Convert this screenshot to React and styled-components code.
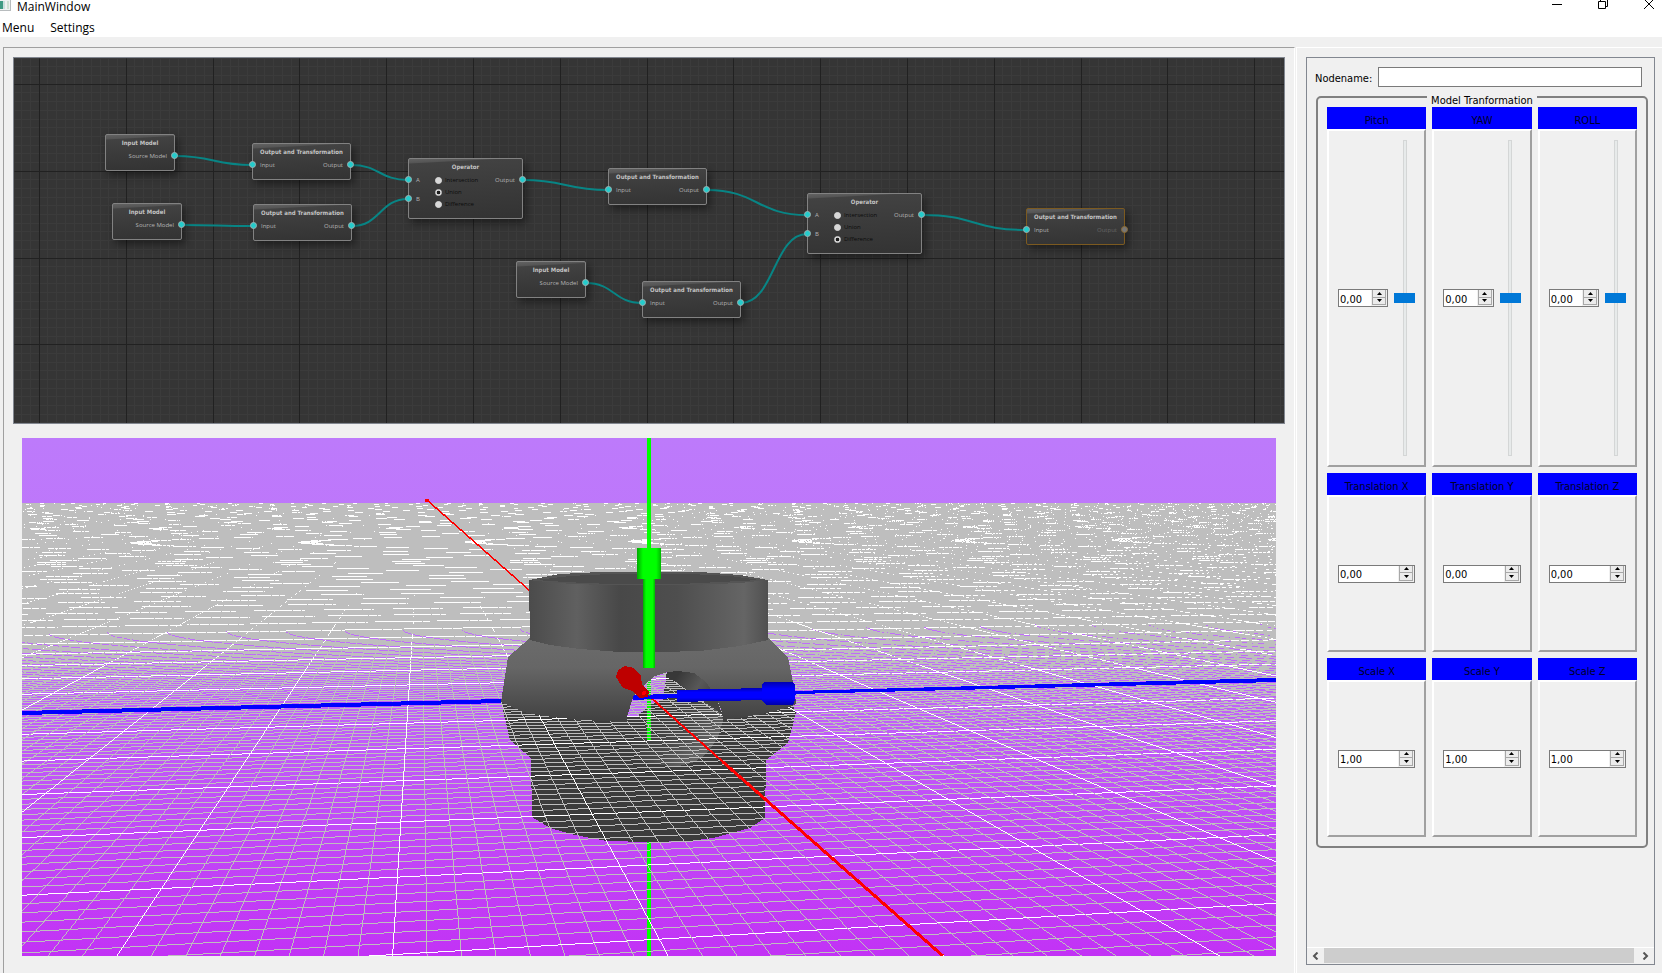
import React, { useMemo } from "react";
import styled, { createGlobalStyle } from "styled-components";

const GlobalStyle = createGlobalStyle`
  *, *::before, *::after { box-sizing: border-box; }
  body { margin: 0; background: #f0f0f0; color: #000; font: 11px/14px "DejaVu Sans Condensed", "DejaVu Sans", sans-serif; }
  button, input { font: inherit; color: inherit; margin: 0; }
`;

/* ---------- window chrome ---------- */

const Window = styled.div`
  display: flex;
  flex-direction: column;
  min-height: 100vh;
  overflow: hidden;
`;

const TitleBar = styled.header`
  display: flex;
  align-items: flex-start;
  height: 17px;
  background: #fff;
  font: 12px/14px "Open Sans", "Noto Sans", sans-serif;
`;

const AppTitle = styled.h1`
  flex: 1;
  margin: 0 0 0 5px;
  font: inherit;
`;

const WindowButtons = styled.div`
  display: flex;
  gap: 36px;
  padding-right: 8px;
`;

const WindowButton = styled.button`
  width: 10px;
  height: 11px;
  padding: 0;
  border: 0;
  background: none;
  svg { display: block; }
`;

const MenuBar = styled.nav`
  display: flex;
  gap: 16px;
  height: 20px;
  padding-left: 2px;
  background: #fff;
`;

const MenuButton = styled.button`
  padding: 0;
  border: 0;
  background: none;
  font: 12px/22px "Open Sans", "Noto Sans", sans-serif;
`;

const Main = styled.main`
  display: flex;
  flex: 1;
  gap: 1px;
  padding: 10px 0 0 3px;
`;

const WorkPane = styled.section`
  display: flex;
  flex: 1;
  flex-direction: column;
  gap: 14px;
  min-width: 0;
  padding: 9px 9px 17px;
  border: solid #a0a0a0;
  border-width: 1px 1px 0 1px;
  border-right-color: #fff;
`;

/* ---------- node graph ---------- */

const Graph = styled.div`
  position: relative;
  flex: 365 1 0;
  overflow: hidden;
  border: 1px solid #828790;
  background: #353535;
`;

const GraphLayer = styled.svg`
  position: absolute;
  inset: 0;
  width: 100%;
  height: 100%;
`;

const NodeBox = styled.article`
  position: absolute;
  left: ${(p) => p.$x}px;
  top: ${(p) => p.$y}px;
  width: ${(p) => p.$w}px;
  height: ${(p) => p.$h}px;
  padding-top: 3px;
  border: 1px solid ${(p) => (p.$selected ? "#7c5a20" : "#828282")};
  border-radius: 2px;
  background: linear-gradient(177deg, #626262 0, #555 4px, #424242 5px, #3b3b3b 50%, #333 100%);
  box-shadow: 3px 4px 8px rgba(0, 0, 0, 0.45);
  color: #b4b4b4;
  font: 6px/8px "Open Sans", "Noto Sans", sans-serif;
`;

const NodeTitle = styled.h2`
  margin: 0 0 4px;
  color: #c4c4c4;
  font: bold 6px/10px "DejaVu Sans Condensed", "DejaVu Sans", sans-serif;
  text-align: center;
  white-space: nowrap;
`;

const NodeBody = styled.div`
  display: flex;
  justify-content: space-between;
`;

const PortList = styled.div`
  display: flex;
  flex-direction: column;
  gap: 11px;
`;

const Port = styled.span`
  position: relative;
  padding: 0 7px;
  color: ${(p) => (p.$off ? "#666" : "inherit")};
  &::after {
    content: "";
    position: absolute;
    top: 0;
    ${(p) => (p.$out ? "right: -4px;" : "left: -4px;")}
    width: 7px;
    height: 7px;
    border: 1px solid ${(p) => (p.$off ? "#8a6a34" : "#9ab0b0")};
    border-radius: 50%;
    background: ${(p) => (p.$off ? "#777" : "#24cccc")};
  }
`;

const Choices = styled.div`
  display: flex;
  flex: 1;
  flex-direction: column;
  gap: 4px;
  padding-left: 8px;
`;

const Choice = styled.label`
  display: flex;
  align-items: center;
  gap: 3px;
  height: 8px;
  color: #0c0c0c;
`;

const Radio = styled.input`
  appearance: none;
  width: 7px;
  height: 7px;
  border: 1px solid #d8d8d8;
  border-radius: 50%;
  background: #d8d8d8;
  &:checked { background: radial-gradient(circle, #1c1c1c 40%, #d8d8d8 60%); }
`;

const NODES = [
  { id: "in1", kind: "input", x: 91, y: 76 },
  { id: "in2", kind: "input", x: 98, y: 145 },
  { id: "out1", kind: "output", x: 238, y: 85 },
  { id: "out2", kind: "output", x: 239, y: 146 },
  { id: "op1", kind: "operator", x: 394, y: 100, value: "Union" },
  { id: "out3", kind: "output", x: 594, y: 110 },
  { id: "in3", kind: "input", x: 502, y: 203 },
  { id: "out4", kind: "output", x: 628, y: 223 },
  { id: "op2", kind: "operator", x: 793, y: 135, value: "Difference" },
  { id: "out5", kind: "output", x: 1012, y: 150, selected: true },
];

const SIZES = { input: [70, 37], output: [99, 37], operator: [115, 61] };

const LINKS = [
  ["in1", "out1", 0],
  ["in2", "out2", 0],
  ["out1", "op1", 0],
  ["out2", "op1", 1],
  ["op1", "out3", 0],
  ["in3", "out4", 0],
  ["out3", "op2", 0],
  ["out4", "op2", 1],
  ["op2", "out5", 0],
];

function Node({ node }) {
  const [w, h] = SIZES[node.kind];
  const box = { $x: node.x, $y: node.y, $w: w, $h: h, $selected: node.selected };
  if (node.kind === "input") {
    return (
      <NodeBox {...box}>
        <NodeTitle>Input Model</NodeTitle>
        <NodeBody>
          <span />
          <Port $out>Source Model</Port>
        </NodeBody>
      </NodeBox>
    );
  }
  if (node.kind === "output") {
    return (
      <NodeBox {...box}>
        <NodeTitle>Output and Transformation</NodeTitle>
        <NodeBody>
          <Port>Input</Port>
          <Port $out $off={node.selected}>Output</Port>
        </NodeBody>
      </NodeBox>
    );
  }
  return (
    <NodeBox {...box}>
      <NodeTitle>Operator</NodeTitle>
      <NodeBody>
        <PortList>
          <Port>A</Port>
          <Port>B</Port>
        </PortList>
        <Choices>
          {["Intersection", "Union", "Difference"].map((name) => (
            <Choice key={name}>
              <Radio type="radio" name={node.id} defaultChecked={node.value === name} />
              {name}
            </Choice>
          ))}
        </Choices>
        <Port $out>Output</Port>
      </NodeBody>
    </NodeBox>
  );
}

function gridPath(first, step, skipMajor) {
  let d = "";
  for (let i = 0; i < 440; i++) {
    if (skipMajor && i % 10 === 0) continue;
    d += first(Math.round(i * step));
  }
  return d;
}

function GraphView() {
  const byId = Object.fromEntries(NODES.map((n) => [n.id, n]));
  const major = gridPath((v) => `M${v + 25} 0v2400`, 86.8) + gridPath((v) => `M0 ${v + 26}h4000`, 86.8);
  const minor =
    gridPath((v) => `M${v - 62} 0v2400`, 8.68, true) + gridPath((v) => `M0 ${v - 61}h4000`, 8.68, true);
  return (
    <Graph>
      <GraphLayer aria-hidden="true">
        <g transform="translate(0.5 0.5)" fill="none">
          <path d={minor} stroke="#3b3b3b" />
          <path d={major} stroke="#212121" />
        </g>
        <g fill="none" stroke="#088585" strokeWidth="2">
          {LINKS.map(([from, to, slot]) => {
            const a = byId[from];
            const b = byId[to];
            const x1 = a.x + SIZES[a.kind][0];
            const y1 = a.y + 22;
            const x2 = b.x;
            const y2 = b.y + 22 + slot * 19;
            const mid = (x1 + x2) / 2;
            return <path key={from + to} d={`M${x1} ${y1}C${mid} ${y1} ${mid} ${y2} ${x2} ${y2}`} />;
          })}
        </g>
      </GraphLayer>
      {NODES.map((n) => (
        <Node key={n.id} node={n} />
      ))}
    </Graph>
  );
}

/* ---------- 3D viewport ---------- */

const Viewport = styled.svg`
  display: block;
  flex: 518 1 0;
  min-height: 0;
  width: calc(100% - 18px);
  margin: 0 9px;
`;

// The ground plane in perspective: every line of one direction runs to a shared
// vanishing point on the horizon, and the nearest line wins a contested pixel.
const VIEW = { x: 22, y: 438, w: 1254, h: 518 };
const HORIZON = 495;
const ORIGIN = { x: 649, h: 201 };
const FAR_X = 8310;
const NEAR_X = 421;
const MINOR = 8;
const SPAN = (FAR_X - NEAR_X) / ORIGIN.h;
const STEP_ACROSS = (0.0887 * SPAN) / MINOR;
const ACROSS_0 = (FAR_X - ORIGIN.x) / ORIGIN.h;
const STEP_ALONG = 0.598 / MINOR;
const ALONG_0 = (ORIGIN.x - NEAR_X) / ORIGIN.h;

function groundPaths() {
  const grey = [];
  const white = [];
  const top = 503;
  const right = VIEW.x + VIEW.w;
  for (let y = top; y < VIEW.y + VIEW.h; y++) {
    const h0 = y - HORIZON;
    const h1 = h0 + 1;
    let run = 0;
    let start = VIEW.x;
    for (let x = VIEW.x; x <= right; x++) {
      let cell = 0;
      if (x < right) {
        const cx = x + 0.5;
        let best = -1;
        const far = (FAR_X - cx) / STEP_ACROSS;
        const i = Math.ceil(far / h1 - ACROSS_0 / STEP_ACROSS);
        const hi = far / (i + ACROSS_0 / STEP_ACROSS);
        if (hi >= h0) {
          best = hi;
          cell = i % MINOR === 0 ? 2 : 1;
        }
        const dx = cx - NEAR_X;
        const slope = dx / (h0 + 0.5);
        let j;
        let hj = -1;
        if (Math.abs(slope) > 1) {
          j = (dx / h1 - ALONG_0) / STEP_ALONG;
          j = dx > 0 ? Math.ceil(j) : Math.floor(j);
          hj = dx / (ALONG_0 + j * STEP_ALONG);
          if (hj < h0 || hj > h1) hj = -1;
        } else {
          const hm = h0 + 0.5;
          j = Math.ceil(((dx - 0.5) / hm - ALONG_0) / STEP_ALONG);
          if ((ALONG_0 + j * STEP_ALONG) * hm < dx + 0.5) hj = hm;
        }
        if (hj > best) cell = j % MINOR === 0 ? 2 : 1;
        else if (hj >= 0 && j % MINOR === 0 && h0 > 170) cell = 2;
      } else cell = -1;
      if (cell !== run) {
        if (run > 0) (run === 1 ? grey : white).push(`M${start} ${y}h${x - start}v1h${start - x}z`);
        run = cell;
        start = x;
      }
    }
  }
  return { grey: grey.join(""), white: white.join("") };
}

function SceneView() {
  const ground = useMemo(groundPaths, []);
  return (
    <Viewport viewBox="22 438 1254 518" preserveAspectRatio="xMidYMid slice" shapeRendering="crispEdges" role="img" aria-label="3D model view">
      <defs>
        <linearGradient id="sky" x1="0" y1="0" x2="0" y2="1">
          <stop offset="0" stopColor="#bd7afb" />
          <stop offset="0.35" stopColor="#bf72fa" />
          <stop offset="1" stopColor="#c232f5" />
        </linearGradient>
        <linearGradient id="neck" x1="0" y1="0" x2="1" y2="0">
          <stop offset="0" stopColor="#4b4b4b" />
          <stop offset="0.2" stopColor="#606060" />
          <stop offset="0.38" stopColor="#484848" />
          <stop offset="0.62" stopColor="#4e4e4e" />
          <stop offset="0.9" stopColor="#656565" />
          <stop offset="1" stopColor="#505050" />
        </linearGradient>
        <linearGradient id="belly" x1="0" y1="0" x2="0" y2="1">
          <stop offset="0" stopColor="#6b6b6b" />
          <stop offset="0.35" stopColor="#666" />
          <stop offset="1" stopColor="#404040" />
        </linearGradient>
        <linearGradient id="bore" x1="0" y1="0" x2="1" y2="1">
          <stop offset="0.35" stopColor="#3a3a3a" />
          <stop offset="0.6" stopColor="#484848" />
          <stop offset="0.8" stopColor="#646464" />
        </linearGradient>
        <linearGradient id="boreTop" x1="0" y1="0" x2="1" y2="0.5">
          <stop offset="0.2" stopColor="#383838" />
          <stop offset="0.6" stopColor="#585858" />
          <stop offset="0.9" stopColor="#444" />
        </linearGradient>
        <linearGradient id="greenRod" x1="0" y1="0" x2="1" y2="0">
          <stop offset="0" stopColor="#00a800" />
          <stop offset="0.25" stopColor="#00ff00" />
          <stop offset="0.8" stopColor="#00ff00" />
          <stop offset="1" stopColor="#00b800" />
        </linearGradient>
        <linearGradient id="blueRod" x1="0" y1="0" x2="0" y2="1">
          <stop offset="0" stopColor="#0000b0" />
          <stop offset="0.3" stopColor="#0000ff" />
          <stop offset="0.7" stopColor="#0000ff" />
          <stop offset="1" stopColor="#0000a8" />
        </linearGradient>
      </defs>
      <rect x="22" y="438" width="1254" height="518" fill="url(#sky)" />
      <path d="M647 842h4v114h-4z" fill="#0f0" />
      <path
        d="M501 702L510 740L531 758L532 817L550 828L575 835L607 841L648 842L690 841L713 838L750 828L765 818L766 760L788 743L796 712L790 700L723 712L640 700L627 716L560 700z"
        fill="#3c3c3c"
      />
      <path d="M627 717L633 697L650 680L667 672L690 673L707 684L718 700L723 720L718 738L706 754L695 762L675 767L645 762L632 745z" fill="url(#bore)" />
      <path d="M627 717L633 697L643 686L652 679L667 672L663 700L652 704L642 712L636 717z" fill="#c06cf9" />
      <path d="M647 679h4v61h-4z" fill="#0f0" />
      <path d={ground.grey} fill="#bebebe" />
      <path d={ground.white} fill="#fff" />
      <path d="M647 438h4v110h-4z" fill="#0f0" />
      <path d="M22 711L501 699v4L22 715zM633 695l163 -4v4l-163 4zM795 691L1276 678v4L795 694z" fill="#00f" />
      <path d="M427 500l102 90" stroke="#f00" strokeWidth="1.5" />
      <path d="M425 499h4v3h-4z" fill="#f00" />
      <path
        d="M530 638L508 657L501 702L523 712L545 716L580 720L627 722L627 717L633 697L643 686L655 676L667 672L678 671L694 673L706 682L716 697L722 712L723 720L745 717L767 713L790 707L796 704L795 693L788 657L768 638z"
        fill="url(#belly)"
      />
      <path d="M667 672L678 671L694 673L706 682L716 697L722 714L708 704L690 692L676 682L666 677z" fill="url(#boreTop)" />
      <path d="M529 580L560 574L600 572L648 572L700 572L740 575L768 580V640L740 646L700 651L660 652L620 652L580 649L550 645L530 640z" fill="url(#neck)" />
      <path d="M529 580L560 574L600 572H700L740 575L768 580L740 583L690 585H600L555 583z" fill="#555" />
      <path d="M536 580L570 576L610 574H690L730 576L760 580L720 582L680 584H610L565 582z" fill="#4a4a4a" />
      <path d="M643 578h12v90h-12z" fill="url(#greenRod)" />
      <path d="M637 548h24v31h-24z" fill="url(#greenRod)" />
      <path d="M649 696L723 762" stroke="#f00" strokeWidth="2" />
      <path d="M723 762L943 956" stroke="#f00" strokeWidth="3" />
      <path d="M633 697l45 -3v4l-45 2z" fill="#00f" />
      <path d="M677 690L762 688V700L677 702z" fill="url(#blueRod)" />
      <path d="M762 684l3 -2H793l2 3V700l-2 5H766l-4 -4z" fill="url(#blueRod)" />
      <path d="M616 677L618 670L625 666L634 668L641 676L642 685L649 692L648 697L640 698L632 691L623 688z" fill="#be0000" />
      <circle cx="644" cy="693" r="2" fill="#f00" />
    </Viewport>
  );
}

/* ---------- property pane ---------- */

const SidePane = styled.aside`
  display: flex;
  flex: 0 0 366px;
  padding: 9px 7px 8px 9px;
  border: solid #fff;
  border-width: 1px 0 0 1px;
`;

const ScrollArea = styled.div`
  display: flex;
  flex: 1;
  flex-direction: column;
  min-width: 0;
  border: 1px solid #828790;
`;

const Properties = styled.form`
  flex: 1;
  padding: 9px 6px 0 8px;
`;

const NameRow = styled.div`
  display: flex;
  gap: 6px;
  padding-right: 6px;
`;

const NameLabel = styled.label`
  flex: 0 0 56px;
  padding-top: 5px;
  white-space: nowrap;
`;

const NameInput = styled.input`
  flex: 1;
  min-width: 0;
  height: 20px;
  padding: 0 3px;
  border: 1px solid #7a7a7a;
  background: #fff;
`;

const Group = styled.fieldset`
  min-width: 0;
  margin: 3px 0 0 1px;
  padding: 3px 9px 9px;
  border: 2px solid #808080;
  border-radius: 5px;
`;

const GroupTitle = styled.legend`
  margin: 0 auto;
  padding: 7px 4px 0;
  line-height: 7px;
`;

const CardGrid = styled.div`
  display: grid;
  grid-template-columns: repeat(3, minmax(0, 1fr));
  gap: 6px;
`;

const CardTitle = styled.label`
  display: block;
  height: 22px;
  padding-top: 4px;
  background: #00f;
  color: #000028;
  line-height: 20px;
  text-align: center;
`;

const CardBody = styled.div`
  display: flex;
  align-items: center;
  gap: 6px;
  height: ${(p) => (p.$tall ? 338 : 157)}px;
  padding: 0 9px;
  border: 2px solid;
  border-color: #fff #a0a0a0 #a0a0a0 #fff;
`;

const Spin = styled.div`
  display: flex;
  flex: 1;
  min-width: 0;
  height: 18px;
  border: 1px solid #7a7a7a;
  background: #fff;
`;

const SpinInput = styled.input`
  flex: 1;
  width: 0;
  min-width: 0;
  height: 16px;
  padding: 2px 0 0 1px;
  border: 0;
  background: none;
  outline: 0;
`;

const SpinButtons = styled.div`
  display: flex;
  flex: 0 0 16px;
  flex-direction: column;
  padding: 0 1px 1px;
  background: #f0f0f0;
`;

const SpinButton = styled.button`
  display: flex;
  flex: 1;
  align-items: center;
  justify-content: center;
  min-height: 0;
  padding: 0;
  border: 1px solid #a8a8a8;
  border-top: 0;
  background: #ececec;
`;

const Slider = styled.input`
  appearance: none;
  writing-mode: vertical-lr;
  flex: 0 0 21px;
  width: 21px;
  height: 316px;
  background:
    linear-gradient(#e7eaea, #e7eaea) center / 2px calc(100% - 2px) no-repeat,
    linear-gradient(#d4d6d6, #d4d6d6) center / 4px 100% no-repeat;
  &::-webkit-slider-thumb {
    appearance: none;
    width: 21px;
    height: 10px;
    border: 0;
    border-radius: 0;
    background: #0078d7;
  }
`;

const ScrollBar = styled.div`
  display: flex;
  height: 17px;
  padding-bottom: 1px;
  border-top: 1px solid #fff;
`;

const ScrollButton = styled.button`
  display: flex;
  flex: 0 0 17px;
  align-items: center;
  justify-content: center;
  padding: 0;
  border: 0;
  background: none;
`;

const ScrollThumb = styled.div`
  flex: 1;
  margin-right: 3px;
  background: #cdcdcd;
`;

const CARDS = [
  { title: "Pitch", value: "0,00", slider: true },
  { title: "YAW", value: "0,00", slider: true },
  { title: "ROLL", value: "0,00", slider: true },
  { title: "Translation X", value: "0,00" },
  { title: "Translation Y", value: "0,00" },
  { title: "Translation Z", value: "0,00" },
  { title: "Scale X", value: "1,00" },
  { title: "Scale Y", value: "1,00" },
  { title: "Scale Z", value: "1,00" },
];

function Card({ title, value, slider }) {
  const id = title.toLowerCase().replace(" ", "-");
  return (
    <div>
      <CardTitle htmlFor={id}>{title}</CardTitle>
      <CardBody $tall={slider}>
        <Spin>
          <SpinInput id={id} defaultValue={value} />
          <SpinButtons>
            <SpinButton type="button" aria-label={`Increase ${title}`}>
              <svg width="5" height="3" aria-hidden="true"><path d="M0 3L2.500 0L5 3z" /></svg>
            </SpinButton>
            <SpinButton type="button" aria-label={`Decrease ${title}`}>
              <svg width="5" height="3" aria-hidden="true"><path d="M0 0L2.500 3L5 0z" /></svg>
            </SpinButton>
          </SpinButtons>
        </Spin>
        {slider && <Slider type="range" min="-180" max="180" defaultValue="0" aria-label={`${title} slider`} />}
      </CardBody>
    </div>
  );
}

export default function App() {
  return (
    <Window>
      <GlobalStyle />
      <TitleBar>
        <svg width="12" height="12" aria-hidden="true">
          <path d="M0 0h11v11h-11z" fill="#b8bcbe" />
          <path d="M0 0h10v10h-10z" fill="#eef1f2" />
          <path d="M0 1h3v8h-3z" fill="#3f9a84" />
          <path d="M3 1h2v8h-2z" fill="#c9dfdc" />
          <path d="M7 1h2v8h-2z" fill="#cfe0d4" />
        </svg>
        <AppTitle>MainWindow</AppTitle>
        <WindowButtons>
          <WindowButton aria-label="Minimize">
            <svg width="10" height="11"><path d="M0 4.500h10" stroke="#000" /></svg>
          </WindowButton>
          <WindowButton aria-label="Restore">
            <svg width="10" height="11"><path d="M0.500 1.500h7v7h-7zM2.500 1.500v-2M9.500 0v6.500h-2" fill="none" stroke="#000" /></svg>
          </WindowButton>
          <WindowButton aria-label="Close">
            <svg width="10" height="11"><path d="M0 -1l10 10M10 -1l-10 10" stroke="#000" /></svg>
          </WindowButton>
        </WindowButtons>
      </TitleBar>
      <MenuBar>
        <MenuButton>Menu</MenuButton>
        <MenuButton>Settings</MenuButton>
      </MenuBar>
      <Main>
        <WorkPane>
          <GraphView />
          <SceneView />
        </WorkPane>
        <SidePane>
          <ScrollArea>
            <Properties>
              <NameRow>
                <NameLabel htmlFor="nodename">Nodename:</NameLabel>
                <NameInput id="nodename" type="text" />
              </NameRow>
              <Group>
                <GroupTitle>Model Tranformation</GroupTitle>
                <CardGrid>
                  {CARDS.map((c) => (
                    <Card key={c.title} {...c} />
                  ))}
                </CardGrid>
              </Group>
            </Properties>
            <ScrollBar>
              <ScrollButton aria-label="Scroll left">
                <svg width="7" height="8"><path d="M5.500 0.500L2 4L5.500 7.500" fill="none" stroke="#555" strokeWidth="2" /></svg>
              </ScrollButton>
              <ScrollThumb />
              <ScrollButton aria-label="Scroll right">
                <svg width="7" height="8"><path d="M1.500 0.500L5 4L1.500 7.500" fill="none" stroke="#555" strokeWidth="2" /></svg>
              </ScrollButton>
            </ScrollBar>
          </ScrollArea>
        </SidePane>
      </Main>
    </Window>
  );
}
